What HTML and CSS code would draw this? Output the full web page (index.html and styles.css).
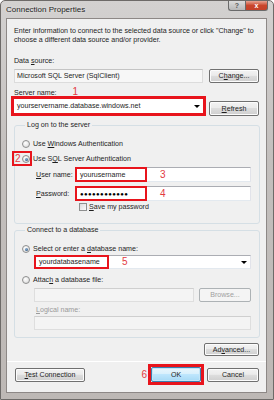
FILE: index.html
```html
<!DOCTYPE html>
<html lang="en">
<head>
  <meta charset="UTF-8" />
  <title>Connection Properties</title>
  <link rel="stylesheet" href="styles.css">
</head>
<body>
  <div class="window">
    <div class="titlebar">
      <span class="title">Connection Properties</span>
      <div class="caption-buttons">
        <span class="cap help">?</span>
        <span class="cap close">x</span>
      </div>
    </div>

    <div class="client">
      <p class="intro">Enter information to connect to the selected data source or click "Change" to<br>choose a different data source and/or provider.</p>

      <div class="label first">Data <u>s</u>ource:</div>
      <div class="row">
        <div class="textbox readonly grow">Microsoft SQL Server (SqlClient)</div>
        <button class="btn side">C<u>h</u>ange...</button>
      </div>

      <div class="label server-label">S<u>e</u>rver name:<span class="num num-1">1</span></div>
      <div class="row server-row">
        <div class="combo marked grow"><span>yourservername.database.windows.net</span><span class="arrow"></span></div>
        <button class="btn side"><u>R</u>efresh</button>
      </div>

      <fieldset class="group logon">
        <legend>Log on to the server</legend>
        <div class="option first-option"><span class="radio"></span><span>Use <u>W</u>indows Authentication</span></div>
        <div class="option second-option">
          <span class="mark-2"><span class="num">2</span></span>
          <span class="radio on"></span><span>Use S<u>Q</u>L Server Authentication</span>
        </div>
        <div class="field user-row">
          <span class="field-label"><u>U</u>ser name:</span>
          <div class="textbox grow"><span class="marked-part">yourusername</span><span class="num">3</span></div>
        </div>
        <div class="field pass-row">
          <span class="field-label"><u>P</u>assword:</span>
          <div class="textbox grow"><span class="marked-part dots">●●●●●●●●●●●●</span><span class="num">4</span></div>
        </div>
        <div class="check-row"><span class="checkbox"></span><span><u>S</u>ave my password</span></div>
      </fieldset>

      <fieldset class="group database">
        <legend>Connect to a database</legend>
        <div class="option first-option"><span class="radio on"></span><span>Select or enter a <u>d</u>atabase name:</span></div>
        <div class="combo db-combo indent">
          <span class="marked-part">yourdatabasename</span><span class="num">5</span><span class="arrow"></span>
        </div>
        <div class="option attach-option"><span class="radio"></span><span>Attac<u>h</u> a database file:</span></div>
        <div class="row file-row indent">
          <div class="textbox disabled grow"></div>
          <button class="btn browse" disabled>Browse...</button>
        </div>
        <div class="label disabled-text logical indent"><u>L</u>ogical name:</div>
        <div class="textbox disabled indent logical-box"></div>
      </fieldset>

      <div class="advanced-row">
        <button class="btn advanced">Ad<u>v</u>anced...</button>
      </div>

      <div class="separator"></div>

      <div class="bottom-row">
        <button class="btn test"><u>T</u>est Connection</button>
        <span class="num num-6">6</span>
        <div class="ok-mark"><button class="btn ok">OK</button></div>
        <button class="btn cancel">Cancel</button>
      </div>
    </div>
  </div>
</body>
</html>
```

FILE: styles.css
```css
* {
  box-sizing: border-box;
}

body {
  margin: 0;
  width: 274px;
  height: 400px;
  overflow: hidden;
  font-family: "Liberation Sans", Arial, sans-serif;
  font-size: 7.1px;
  color: #1e1e1e;
  background: #fff;
}

u {
  text-decoration: underline;
  text-underline-offset: 1px;
}

.window {
  width: 274px;
  height: 400px;
  display: flex;
  flex-direction: column;
  padding: 0 6px 6px 5px;
  background: linear-gradient(#d3d1d0, #c3bfbd 40%, #bdb8b5);
  border: 1px solid #6d6a68;
  border-radius: 5px 5px 0 0;
}

.titlebar {
  height: 17px;
  display: flex;
  align-items: flex-start;
  justify-content: space-between;
  flex-shrink: 0;
}

.title {
  margin-top: 4px;
  font-size: 8px;
  color: #222;
  text-shadow: 0 0 3px #eee;
}

.caption-buttons {
  display: flex;
  margin-right: -1px;
}

.cap {
  height: 10px;
  display: flex;
  align-items: center;
  justify-content: center;
  font-size: 7px;
  font-weight: bold;
  color: #fff;
  border: 1px solid #6a6a6a;
  border-top: none;
}

.help {
  width: 17px;
  background: linear-gradient(#dcdcdc, #b8b8b8);
  border-radius: 0 0 0 3px;
  border-right: none;
  color: #5a5a5a;
}

.close {
  width: 23px;
  background: linear-gradient(#e8a493, #c9462c 50%, #c4412a);
  border-radius: 0 0 3px 0;
}

.client {
  flex: 1;
  display: flex;
  flex-direction: column;
  padding: 0 7px 2px 7px;
  background: #f0f0f0;
  border: 1px solid #8d8886;
}

.intro {
  margin: 8px 0 0;
  line-height: 9px;
  white-space: nowrap;
}

.label {
  line-height: 9px;
  height: 9px;
}

.label.first {
  margin-top: 12px;
}

.row {
  display: flex;
  align-items: center;
  gap: 6px;
}

.grow {
  flex: 1;
}

.row:not(.server-row) {
  margin-top: 3px;
  height: 14px;
}

.textbox,
.combo {
  position: relative;
  height: 14px;
  display: flex;
  align-items: center;
  padding-left: 2px;
  background: #fff;
  border: 1px solid #abadb3;
  border-color: #abadb3 #e2e3ea #e3e9ef #e2e3ea;
  white-space: nowrap;
}

.textbox.readonly {
  background: #f7f7f7;
  border-color: #c4c4c4 #dcdcdc #dcdcdc #dcdcdc;
}

.textbox.disabled {
  background: #f4f4f4;
  border-color: #cfcfcf #dedede #dedede #dedede;
}

.btn {
  height: 14px;
  padding: 0;
  font-family: inherit;
  font-size: inherit;
  color: #1e1e1e;
  background: linear-gradient(#f3f3f3, #ebebeb 45%, #dddddd 50%, #cfcfcf);
  border: 1px solid #707070;
  border-radius: 2px;
  box-shadow: inset 0 0 0 1px #fcfcfc;
}

.btn.side {
  width: 50px;
}

.server-label {
  margin-top: 5px;
  height: 8px;
  line-height: 8px;
}

.num {
  color: #e33a3f;
  font-size: 10px;
  line-height: 8px;
}

.num-1 {
  margin-left: 16px;
}

.server-row {
  height: 20px;
  margin-top: 0;
  align-items: flex-end;
  gap: 3px;
}

.combo.marked {
  height: 20px;
  margin-left: -3px;
  padding-left: 3px;
  border: 3px solid #e8141c;
}

.server-row .btn {
  height: 15px;
}

.arrow {
  margin-left: auto;
  margin-right: 3px;
  width: 0;
  height: 0;
  border-left: 3px solid transparent;
  border-right: 3px solid transparent;
  border-top: 3px solid #000;
}

.group {
  margin: 5px -1px 0 0;
  padding: 0 8px 11px 7px;
  border: 1px solid #d5dfe5;
  border-radius: 3px;
  min-width: 0;
}

.group legend {
  padding: 0 2px;
  margin-left: 3px;
  line-height: 9px;
}

.option {
  position: relative;
  display: flex;
  align-items: center;
  height: 10px;
  gap: 3px;
}

.first-option {
  margin-top: 9px;
}

.second-option {
  margin-top: 5px;
}

.radio {
  position: relative;
  width: 8px;
  height: 8px;
  flex-shrink: 0;
  border-radius: 50%;
  border: 1px solid #8e8f8f;
  background: radial-gradient(circle at 40% 35%, #fff, #e6e6e6 60%, #cfcfcf);
}

.radio.on::after {
  content: "";
  position: absolute;
  left: 1.5px;
  top: 1.5px;
  width: 3px;
  height: 3px;
  border-radius: 50%;
  background: radial-gradient(circle at 40% 35%, #8ab0d6, #1f466f);
}

.mark-2 {
  position: absolute;
  left: -10px;
  top: -3px;
  width: 20px;
  height: 15px;
  border: 2px solid #e8141c;
  display: flex;
  align-items: center;
  padding-left: 1px;
}

.field {
  display: flex;
  align-items: center;
  height: 15px;
  padding-left: 14px;
}

.user-row {
  margin-top: 3px;
}

.pass-row {
  margin-top: 4px;
}

.field-label {
  width: 39px;
}

.field .textbox {
  height: 15px;
  padding-left: 0;
}

.marked-part {
  display: flex;
  align-items: center;
  align-self: stretch;
  width: 72px;
  margin: -1px 13px -1px -1px;
  padding-left: 3px;
  border: 2px solid #e8141c;
  background: #fff;
}

.dots {
  font-size: 6px;
  letter-spacing: 0.4px;
  color: #000;
}

.check-row {
  display: flex;
  align-items: center;
  gap: 2px;
  height: 10px;
  margin-top: 1px;
  padding-left: 57px;
}

.checkbox {
  width: 8px;
  height: 8px;
  border: 1px solid #8e8f8f;
  background: linear-gradient(135deg, #dcdcdc, #fbfbfb);
}

.database {
  margin-top: 2px;
  padding-bottom: 7px;
}

.indent {
  margin-left: 12px;
}

.db-combo {
  margin-top: 1px;
  padding-left: 0;
}

.db-combo .marked-part {
  width: 75px;
}

.attach-option {
  margin-top: 6px;
}

.file-row {
  gap: 5px;
}

.btn.browse {
  width: 52px;
  color: #a0a0a0;
  border-color: #adb2b5;
  background: #f4f4f4;
  box-shadow: none;
}

.disabled-text {
  color: #9a9a9a;
}

.logical {
  margin-top: 4px;
  padding-left: 2px;
}

.logical-box {
  margin-top: 1px;
}

.advanced-row {
  display: flex;
  justify-content: flex-end;
  margin-top: 5px;
}

.btn.advanced {
  width: 55px;
  height: 13px;
}

.separator {
  height: 1px;
  margin: 5px -7px 0;
  background: #dfdfdf;
  border-bottom: 1px solid #fff;
}

.bottom-row {
  display: flex;
  align-items: center;
  height: 21px;
  margin-top: 2px;
}

.btn.test {
  width: 70px;
  margin-left: 1px;
}

.num-6 {
  margin-left: auto;
  margin-right: 1px;
}

.ok-mark {
  width: 56px;
  height: 21px;
  display: flex;
  align-items: center;
  justify-content: center;
  border: 3px solid #e8141c;
}

.btn.ok {
  width: 50px;
  height: 15px;
  border-color: #3c7fb1;
  background: linear-gradient(#eaf6fd, #d9f0fc 45%, #bee6fd 50%, #a7d9f5);
  box-shadow: inset 0 0 0 1px #c4e5f6;
}

.btn.cancel {
  width: 52px;
  margin-left: 3px;
}
```
